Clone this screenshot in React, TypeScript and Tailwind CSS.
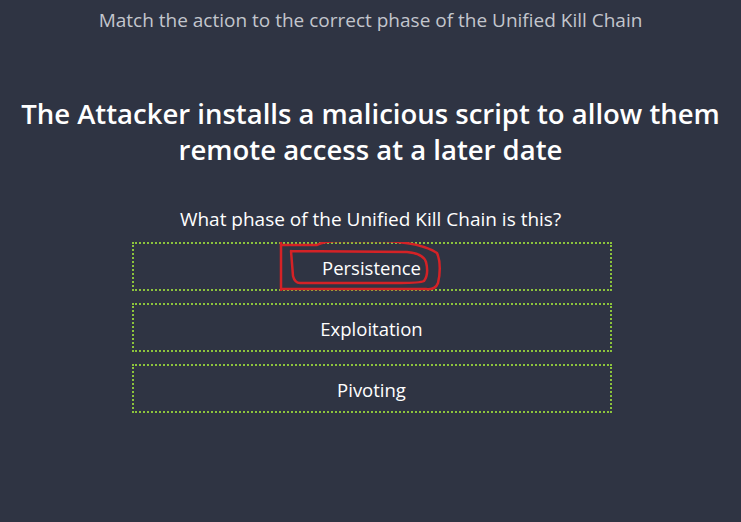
import React from "react";

const options = ["Persistence", "Exploitation", "Pivoting"];

export default function App() {
  return (
    <div
      className="w-[741px] h-[522px] bg-[#2f3443] flex flex-col items-center overflow-hidden"
      style={{ fontFamily: '"Open Sans", "Noto Sans", sans-serif' }}
    >
      <div className="mt-[7px] text-[19px] leading-[26px] text-[#c3c6cd]">
        Match the action to the correct phase of the Unified Kill Chain
      </div>
      <h1 className="mt-[63px] text-[27.5px] leading-[36px] font-semibold text-white text-center">
        The Attacker installs a malicious script to allow them
        <br />
        remote access at a later date
      </h1>
      <div className="mt-[38px] text-[19px] leading-[26px] text-white">
        What phase of the Unified Kill Chain is this?
      </div>
      <div className="mt-[10px] ml-[2px] flex flex-col gap-[12px] w-[480px]">
        {options.map((o, i) => (
          <div
            key={o}
            className="relative h-[49px] pt-[3px] border-2 border-dotted border-[#8cc43c] flex items-center justify-center text-[18.5px] text-white"
          >
            {o}
            {i === 0 && (
              <svg
                className="absolute -left-[2px] -top-[2px] pointer-events-none"
                width="480"
                height="49"
                viewBox="132 242 480 49"
              >
                <g fill="none" stroke="#d42226" strokeWidth="2.5" strokeLinecap="round" strokeLinejoin="round">
                  <path d="M281 242 L281 290" />
                  <path d="M281 245 L317 245 C322 242 328 241 340 241 L385 241 C405 242 425 245 437 253 C441 262 440 275 438 283 C436 288 432 290 426 289 L330 289 L282 289" />
                  <path d="M291 251 L407 252 C418 253 424 256 426 262 C428 270 427 277 424 281 C420 283 410 283 400 283 L300 283 C296 283 294 280 293 276 L291 251" />
                </g>
              </svg>
            )}
          </div>
        ))}
      </div>
    </div>
  );
}
